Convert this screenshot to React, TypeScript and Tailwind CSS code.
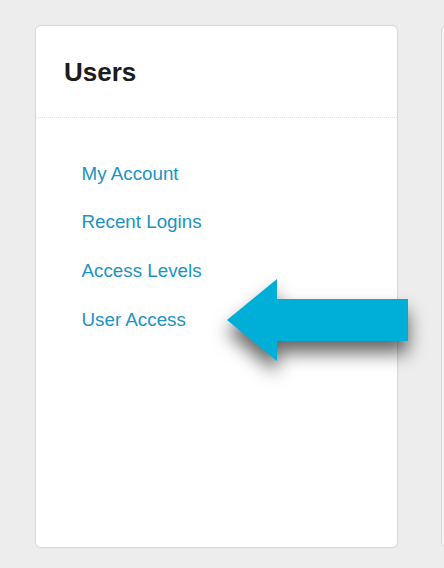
export default function App() {
  const links = ["My Account", "Recent Logins", "Access Levels", "User Access"];
  return (
    <div
      className="relative flex h-[568px] w-[444px] gap-[43px] overflow-hidden bg-[#ededed] pl-[35px] pt-[25px]"
      style={{ fontFamily: '"Liberation Sans", Arial, sans-serif' }}
    >
      {/* Users panel */}
      <div className="flex h-[523px] w-[363px] shrink-0 flex-col rounded-[6px] border border-[#d9d9d9] bg-white shadow-[0_0_2px_rgba(0,0,0,0.06)]">
        <div className="h-[92px] border-b border-dotted border-[#e2e2e2] pl-[28px] pt-[31px]">
          <h2 className="text-[26px] font-bold leading-[30px] text-[#1c1c1c]">Users</h2>
        </div>
        <nav className="flex flex-col gap-[24.7px] pl-[45.5px] pt-[43.7px]">
          {links.map((l) => (
            <a key={l} className="text-[18.8px] leading-[24px] text-[#1b93c4]">
              {l}
            </a>
          ))}
        </nav>
      </div>

      {/* neighbouring panel */}
      <div className="h-[523px] w-[300px] shrink-0 rounded-[6px] border border-[#d9d9d9] bg-[#f6f6f6]" />

      {/* pointer arrow */}
      <svg
        className="pointer-events-none absolute left-0 top-0"
        width="444"
        height="568"
        viewBox="0 0 444 568"
        style={{ filter: "drop-shadow(0 12px 9px rgba(0,0,0,0.6))" }}
      >
        <polygon
          points="227,320 277,279 277,299 408,299 408,341 277,341 277,361"
          fill="#00afd8"
        />
      </svg>
    </div>
  );
}
